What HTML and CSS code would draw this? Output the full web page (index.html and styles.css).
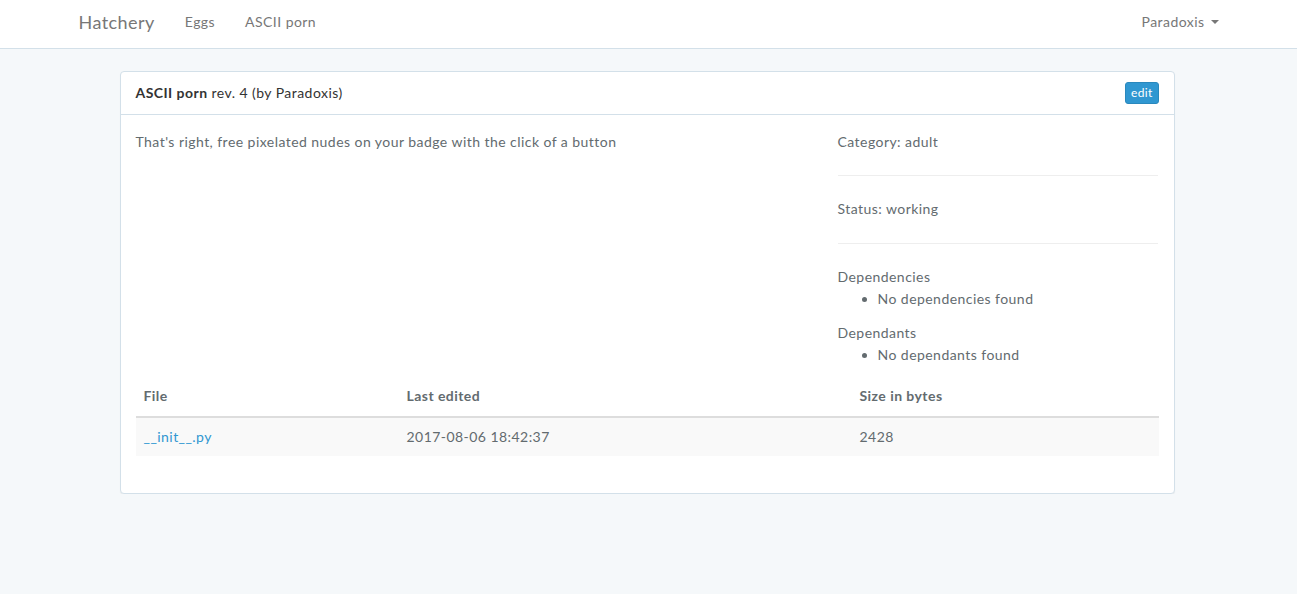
FILE: index.html
```html
<!DOCTYPE html>
<html>
<head>
<meta charset="utf-8">
<title>Hatchery</title>
<link rel="stylesheet" href="styles.css">
</head>
<body>
<nav class="navbar">
  <div class="container nav-inner">
    <div class="nav-left">
      <a class="brand" href="#">Hatchery</a>
      <a class="nav-link" href="#">Eggs</a>
      <a class="nav-link" href="#">ASCII porn</a>
    </div>
    <div class="nav-right">
      <a class="nav-link" href="#">Paradoxis <span class="caret"></span></a>
    </div>
  </div>
</nav>
<main class="container">
  <div class="panel">
    <div class="panel-heading">
      <div class="title"><strong>ASCII porn</strong> rev. 4 (by Paradoxis)</div>
      <a class="btn-edit" href="#">edit</a>
    </div>
    <div class="panel-body">
      <div class="row">
        <div class="col-main">
          <p>That's right, free pixelated nudes on your badge with the click of a button</p>
        </div>
        <div class="col-side">
          <p>Category: adult</p>
          <hr>
          <p>Status: working</p>
          <hr>
          <div class="deps">Dependencies</div>
          <ul><li>No dependencies found</li></ul>
          <div class="deps">Dependants</div>
          <ul><li>No dependants found</li></ul>
        </div>
      </div>
      <table class="files">
        <thead>
          <tr><th class="c1">File</th><th class="c2">Last edited</th><th class="c3">Size in bytes</th></tr>
        </thead>
        <tbody>
          <tr><td><a href="#">__init__.py</a></td><td>2017-08-06 18:42:37</td><td>2428</td></tr>
        </tbody>
      </table>
    </div>
  </div>
</main>
</body>
</html>
```
FILE: styles.css
```css
* { box-sizing: border-box; }
html, body { margin: 0; padding: 0; }
body {
  background: #f5f8fa;
  font-family: "Lato", "Open Sans", sans-serif;
  font-size: 14px;
  line-height: 1.6;
  letter-spacing: 0.45px;
  color: #636b6f;
}
a { text-decoration: none; }
.container {
  width: 1170px;
  margin: 0 auto;
  padding: 0 15px;
}
.navbar {
  background: #fff;
  border-bottom: 1px solid #d3e0e9;
  height: 49px;
  margin-bottom: 22px;
}
.nav-inner {
  display: flex;
  justify-content: space-between;
  align-items: center;
  height: 48px;
  padding-bottom: 4px;
}
.nav-left, .nav-right { display: flex; align-items: center; }
.brand {
  font-size: 18px;
  color: #777;
  padding: 0 15px 0 0;
  line-height: 20px;
}
.nav-link {
  color: #777;
  padding: 0 15px;
  line-height: 20px;
  display: flex;
  align-items: center;
}
.nav-right .nav-link { padding-right: 0; }
.caret {
  display: inline-block;
  width: 0; height: 0;
  margin-left: 6px;
  border-top: 4px solid #777;
  border-left: 4px solid transparent;
  border-right: 4px solid transparent;
}
.panel {
  margin: 0 44px 0 41px;
  background: #fff;
  border: 1px solid #d3e0e9;
  border-radius: 4px;
  box-shadow: 0 1px 1px rgba(0,0,0,0.05);
}
.panel-heading {
  display: flex;
  justify-content: space-between;
  align-items: center;
  padding: 10px 15px;
  border-bottom: 1px solid #d3e0e9;
  color: #333;
  height: 43px;
}
.title strong { font-weight: 700; }
.btn-edit {
  background: #3097d1;
  border: 1px solid #2a88bd;
  color: #fff;
  font-size: 12px;
  line-height: 18px;
  padding: 1px 5px;
  border-radius: 3px;
  letter-spacing: 0.3px;
}
.panel-body { padding: 16px 15px 15px; }
.row { display: flex; margin: 0 -15px; }
.col-main { width: 66.6667%; padding: 0 15px; }
.col-side { width: 33.3333%; padding: 0 15px; }
p { margin: 0 0 11px; }
hr {
  margin: 22px 0;
  border: 0;
  border-top: 1px solid #eee;
}
ul { margin: 0 0 11px; padding-left: 40px; }
.files {
  width: 100%;
  border-collapse: collapse;
  margin-bottom: 22px;
}
.files th, .files td {
  text-align: left;
  padding: 8px;
  line-height: 1.6;
}
.files th { font-weight: 700; border-bottom: 2px solid #ddd; }
.files td { border-top: 1px solid #ddd; }
.files tbody tr { background: #f9f9f9; }
.files td a { color: #3097d1; }
.c1 { width: 263px; }
.c2 { width: 453px; }
```
